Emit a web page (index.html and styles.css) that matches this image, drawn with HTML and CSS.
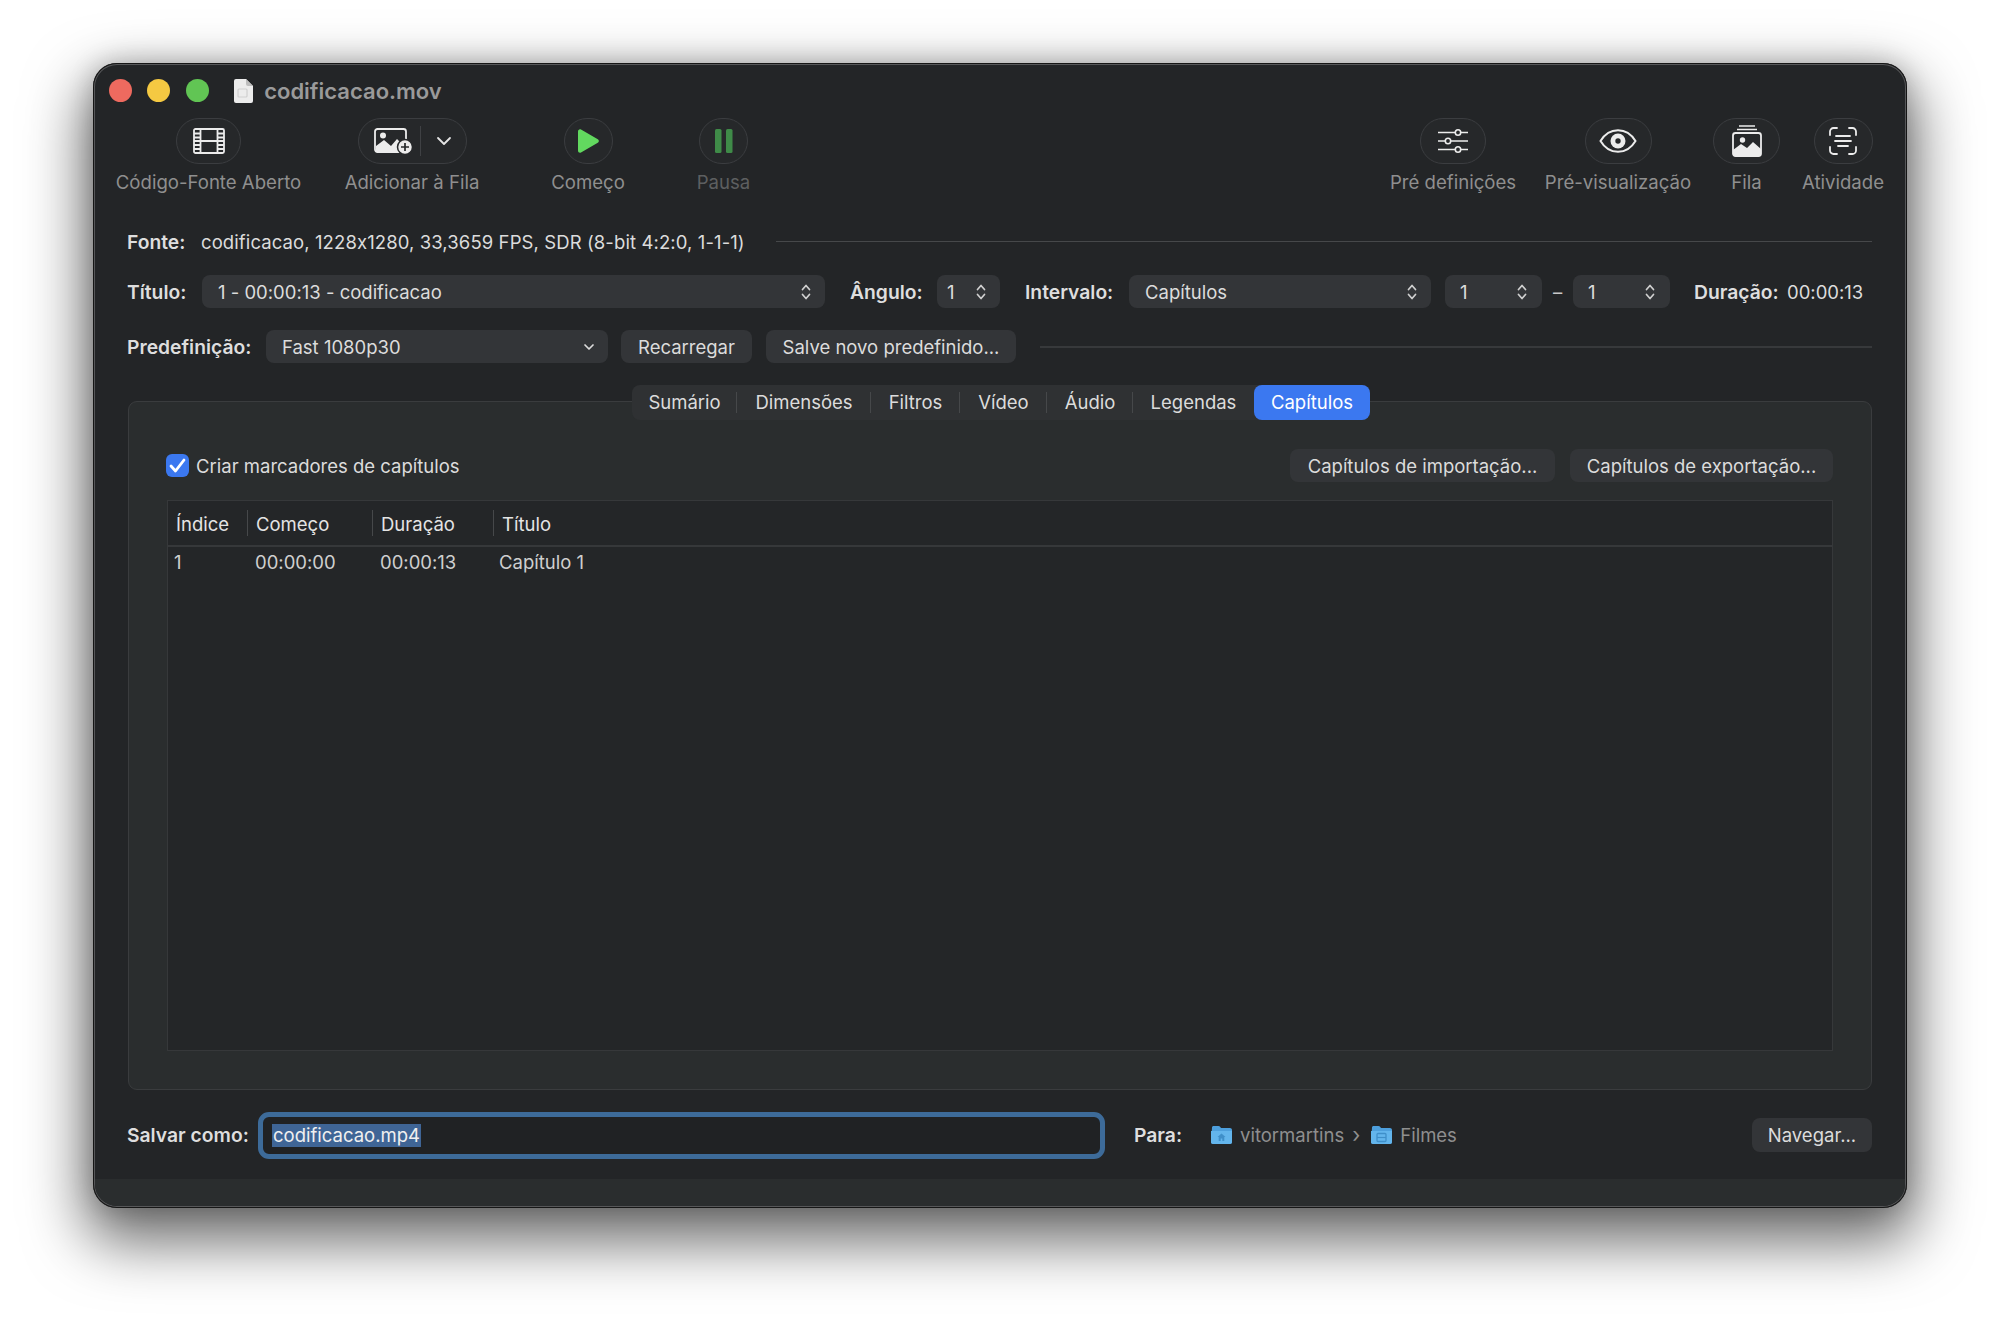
FILE: index.html
```html
<!DOCTYPE html>
<html lang="pt">
<head>
<meta charset="utf-8">
<title>codificacao.mov</title>
<link rel="stylesheet" href="styles.css">
</head>
<body>
<svg class="defs" width="0" height="0" aria-hidden="true">
  <symbol id="updown" viewBox="0 0 10 18"><path d="M1.5 6.5 5 2.5l3.5 4M1.5 11.5 5 15.500l3.500-4" fill="none" stroke="currentColor" stroke-width="1.700" stroke-linecap="round" stroke-linejoin="round"/></symbol>
</svg>
<main class="window">
  <header class="titlebar">
    <span class="light red"></span><span class="light yellow"></span><span class="light green"></span>
    <svg class="doc-icon" width="19" height="24" viewBox="0 0 19 24"><path d="M2 0h10l7 7v15a2 2 0 0 1-2 2H2a2 2 0 0 1-2-2V2a2 2 0 0 1 2-2z" fill="#ececec"/><path d="M12 0l7 7h-5a2 2 0 0 1-2-2z" fill="#bdbdbd"/><rect x="4" y="10" width="9" height="8" rx="1" fill="none" stroke="#cfcfcf" stroke-width="1.200"/></svg>
    <h1 class="doc-title">codificacao.mov</h1>
  </header>

  <nav class="toolbar">
    <div class="tool tool-source">
      <span class="tool-btn btn-source">
        <svg width="32" height="26" viewBox="0 0 32 26" fill="none" stroke="#ececec" stroke-width="1.800"><rect x="1" y="1" width="30" height="24" rx="1.500"/><path d="M7.500 1v24M24.500 1v24M7.500 13h17M1 5.500h6.500M1 9.500h6.500M1 13h6.500M1 17h6.500M1 21h6.500M24.500 5.500H31M24.500 9.500H31M24.500 13H31M24.500 17H31M24.500 21H31"/></svg>
      </span>
      <span class="tool-label">Código-Fonte Aberto</span>
    </div>
    <div class="tool tool-add">
      <span class="tool-btn btn-add">
        <svg class="add-photo" width="40" height="27" viewBox="0 0 40 27"><rect x="1" y="1" width="31" height="23" rx="2.500" fill="none" stroke="#ececec" stroke-width="1.800"/><path d="M2 23v-5l8-6 7 6 6-7 9 9v3z" fill="#ececec"/><circle cx="9" cy="7.500" r="3" fill="#ececec"/><circle cx="31" cy="19" r="7.500" fill="#ececec" stroke="#26282a" stroke-width="1.500"/><path d="M31 15v8M27 19h8" stroke="#26282a" stroke-width="1.700"/></svg>
        <span class="add-split"></span>
        <svg width="16" height="10" viewBox="0 0 16 10"><path d="M2 2l6 6 6-6" fill="none" stroke="#e4e4e4" stroke-width="1.800" stroke-linecap="round" stroke-linejoin="round"/></svg>
      </span>
      <span class="tool-label">Adicionar à Fila</span>
    </div>
    <div class="tool tool-start">
      <span class="tool-btn btn-round">
        <svg width="21" height="24" viewBox="0 0 21 24"><path d="M0 2.500C0 .7 1.600-.3 3 .5l16.800 9.800c1.400.8 1.400 2.700 0 3.500L3 23.500c-1.400.8-3 -.2-3-2z" fill="#62d95f"/></svg>
      </span>
      <span class="tool-label">Começo</span>
    </div>
    <div class="tool tool-pause">
      <span class="tool-btn btn-round">
        <svg width="18" height="24" viewBox="0 0 18 24" fill="#3f8b48"><rect x="0" width="6.500" height="24" rx="1.500"/><rect x="11" width="6.500" height="24" rx="1.500"/></svg>
      </span>
      <span class="tool-label tool-label-dim">Pausa</span>
    </div>
    <div class="tool tool-presets">
      <span class="tool-btn btn-presets">
        <svg width="30" height="24" viewBox="0 0 30 24" fill="#26282a" stroke="#ececec" stroke-width="1.600"><path d="M0 3.500h30M0 12h30M0 20.500h30"/><circle cx="20" cy="3.500" r="2.700"/><circle cx="10" cy="12" r="2.700"/><circle cx="20" cy="20.500" r="2.700"/></svg>
      </span>
      <span class="tool-label">Pré definições</span>
    </div>
    <div class="tool tool-preview">
      <span class="tool-btn btn-preview">
        <svg width="38" height="24" viewBox="0 0 38 24"><path d="M1.500 12C6 4.500 12 1.200 19 1.200S32 4.500 36.500 12C32 19.500 26 22.800 19 22.800S6 19.500 1.500 12z" fill="none" stroke="#ececec" stroke-width="2"/><circle cx="19" cy="12" r="7.500" fill="#ececec"/><circle cx="19" cy="12" r="2.700" fill="#26282a"/></svg>
      </span>
      <span class="tool-label">Pré-visualização</span>
    </div>
    <div class="tool tool-queue">
      <span class="tool-btn btn-queue">
        <svg width="30" height="32" viewBox="0 0 30 32"><path d="M7 1h16M5 4.500h20" stroke="#ececec" stroke-width="1.500" fill="none"/><rect x="1" y="8" width="28" height="23" rx="2.500" fill="none" stroke="#ececec" stroke-width="1.800"/><path d="M1 31v-6l8-6 6 4 6-6 8 7v7z" fill="#ececec"/><circle cx="10.500" cy="15" r="2.700" fill="#ececec"/></svg>
      </span>
      <span class="tool-label">Fila</span>
    </div>
    <div class="tool tool-activity">
      <span class="tool-btn btn-activity">
        <svg width="28" height="28" viewBox="0 0 28 28" fill="none" stroke="#ececec" stroke-width="1.800" stroke-linecap="round"><path d="M1 8V4.500A3.500 3.500 0 0 1 4.500 1H8M20 1h3.500A3.500 3.500 0 0 1 27 4.500V8M27 20v3.500a3.500 3.500 0 0 1-3.500 3.500H20M8 27H4.500A3.500 3.500 0 0 1 1 23.500V20M7 9h14M6 14h16M9 19h10"/></svg>
      </span>
      <span class="tool-label">Atividade</span>
    </div>
  </nav>

  <section class="form">
    <div class="row row-source">
      <b class="lbl lbl-source">Fonte:</b>
      <span class="source-text">codificacao, 1228x1280, 33,3659 FPS, SDR (8-bit 4:2:0, 1-1-1)</span>
      <span class="rule"></span>
    </div>
    <div class="row row-title">
      <b class="lbl lbl-title">Título:</b>
      <span class="select sel-title">1 - 00:00:13 - codificacao<svg class="updown" width="10" height="18"><use href="#updown"/></svg></span>
      <b class="lbl lbl-angle">Ângulo:</b>
      <span class="select sel-angle">1<svg class="updown" width="10" height="18"><use href="#updown"/></svg></span>
      <b class="lbl lbl-range">Intervalo:</b>
      <span class="select sel-range">Capítulos<svg class="updown" width="10" height="18"><use href="#updown"/></svg></span>
      <span class="select sel-num">1<svg class="updown" width="10" height="18"><use href="#updown"/></svg></span>
      <span class="dash">–</span>
      <span class="select sel-num">1<svg class="updown" width="10" height="18"><use href="#updown"/></svg></span>
      <b class="lbl lbl-dur">Duração:</b>
      <span class="dur">00:00:13</span>
    </div>
    <div class="row row-preset">
      <b class="lbl lbl-preset">Predefinição:</b>
      <span class="select sel-preset">Fast 1080p30<svg width="12" height="8" viewBox="0 0 12 8"><path d="M2 2l4 4 4-4" fill="none" stroke="currentColor" stroke-width="1.700" stroke-linecap="round" stroke-linejoin="round"/></svg></span>
      <span class="btn btn-reload">Recarregar</span>
      <span class="btn btn-save">Salve novo predefinido...</span>
      <span class="rule rule-thick"></span>
    </div>

    <div class="tabs">
      <span class="tab">Sumário</span>
      <span class="tab">Dimensões</span>
      <span class="tab">Filtros</span>
      <span class="tab">Vídeo</span>
      <span class="tab">Áudio</span>
      <span class="tab tab-last">Legendas</span>
      <span class="tab tab-active">Capítulos</span>
    </div>

    <div class="panel">
      <div class="panel-head">
        <label class="check">
          <span class="checkbox"><svg width="17" height="15" viewBox="0 0 17 15"><path d="M2 8l4.500 5L15 2" fill="none" stroke="#fff" stroke-width="2.800" stroke-linecap="round" stroke-linejoin="round"/></svg></span>
          Criar marcadores de capítulos
        </label>
        <span class="btn btn-import">Capítulos de importação...</span>
        <span class="btn btn-export">Capítulos de exportação...</span>
      </div>
      <div class="table">
        <div class="thead">
          <span class="th th-index">Índice</span>
          <span class="th th-start">Começo</span>
          <span class="th th-dur">Duração</span>
          <span class="th th-name">Título</span>
        </div>
        <div class="trow">
          <span class="td-index">1</span>
          <span>00:00:00</span>
          <span>00:00:13</span>
          <span>Capítulo 1</span>
        </div>
      </div>
    </div>

    <div class="row row-save">
      <b class="lbl lbl-save">Salvar como:</b>
      <div class="save-field"><span class="selected">codificacao.mp4</span></div>
      <b class="lbl lbl-to">Para:</b>
      <svg class="folder" width="21" height="18" viewBox="0 0 21 18"><path d="M1 1.500C1 .7 1.700 0 2.500 0h5c.6 0 1 .2 1.400.600L10 2h9c1 0 2 .8 2 2v12c0 1.100-.9 2-2 2H2c-1.100 0-2-.9-2-2z" fill="#4d9fdc"/><path d="M0 5h21v11c0 1.100-.9 2-2 2H2c-1.100 0-2-.9-2-2z" fill="#63b5ec"/><path d="M10.500 7.500l-4 3.500h1.200v4h2v-2.500h1.600V15h2v-4h1.200z" fill="#3f8fc9"/></svg>
      <span class="path path-user">vitormartins</span>
      <span class="crumb">›</span>
      <svg class="folder" width="21" height="18" viewBox="0 0 21 18"><path d="M1 1.500C1 .7 1.700 0 2.500 0h5c.6 0 1 .2 1.400.600L10 2h9c1 0 2 .8 2 2v12c0 1.100-.9 2-2 2H2c-1.100 0-2-.9-2-2z" fill="#4d9fdc"/><path d="M0 5h21v11c0 1.100-.9 2-2 2H2c-1.100 0-2-.9-2-2z" fill="#63b5ec"/><rect x="6" y="7.500" width="9" height="8" rx="1" fill="none" stroke="#3f8fc9" stroke-width="1.300"/><path d="M6 11.500h9" stroke="#3f8fc9" stroke-width="1.200"/></svg>
      <span class="path path-movies">Filmes</span>
      <span class="btn btn-browse">Navegar...</span>
    </div>
  </section>
  <div class="status-strip"></div>
</main>
</body>
</html>
```
FILE: styles.css
```css
* { box-sizing: border-box; }
html, body { margin: 0; padding: 0; background: #fff; }
body {
  width: 2000px;
  height: 1332px;
  overflow: hidden;
  padding: 63px 93px 0;
  font-family: Inter, Roboto, "Liberation Sans", sans-serif;
  font-feature-settings: "calt" 0;
  font-size: 18.500px;
  color: #dcdcdc;
}
.defs { display: block; height: 0; }
.window {
  width: 1814px;
  height: 1145px;
  display: flex;
  flex-direction: column;
  background: #232527;
  border-radius: 24px;
  box-shadow: inset 0 0 0 1px #161616, inset 0 0 0 2px #565759, 0 26px 60px 8px rgba(0,0,0,.58), 0 0 26px rgba(0,0,0,.2);
}

.titlebar { height: 55px; flex: none; display: flex; align-items: center; padding-left: 16px; padding-top: 0; }
.light { width: 23px; height: 23px; border-radius: 50%; margin-right: 15.400px; }
.red { background: #ee6a5f; }
.yellow { background: #f5c942; }
.green { background: #61c554; }
.doc-icon { margin-left: 10px; flex: none; }
.doc-title { margin: 0 0 0 11px; font-size: 22px; font-weight: 600; color: #9a9a9a; }

.toolbar { height: 75px; flex: none; display: flex; padding-left: 23px; }
.tool { display: flex; flex-direction: column; align-items: center; flex: none; }
.tool-btn { height: 46px; flex: none; display: flex; align-items: center; justify-content: center; border: 1px solid #3b3d40; border-radius: 23px; background: #26282a; }
.tool-label { margin-top: 6px; line-height: 24px; font-size: 18.600px; color: #8f8f8f; white-space: nowrap; }
.tool-label-dim { color: #5d5f60; }
.tool-source { width: 185px; }
.tool-add { width: 132px; margin-left: 45px; }
.tool-start { width: 72px; margin-left: 74px; }
.tool-pause { width: 51px; margin-left: 74px; }
.tool-presets { width: 124px; margin-left: 642px; }
.tool-preview { width: 144px; margin-left: 31px; }
.tool-queue { width: 67px; margin-left: 23px; }
.tool-activity { width: 80px; margin-left: 23px; }
.btn-source { width: 65px; }
.btn-add { width: 109px; justify-content: flex-start; padding-left: 15px; }
.add-photo { flex: none; }
.add-split { width: 1px; height: 30px; margin: 0 15px 0 6px; background: #3f4144; }
.btn-round { width: 49px; }
.btn-presets { width: 66px; }
.btn-preview { width: 67px; }
.btn-queue { width: 67px; }
.btn-activity { width: 59px; }

.form { flex: 1; display: flex; flex-direction: column; padding: 32px 35px 0 34px; min-height: 0; }
.row { display: flex; align-items: center; height: 33px; flex: none; white-space: nowrap; }
.row-title { margin-top: 17px; }
.row-preset { margin-top: 22px; }
.lbl { font-weight: 600; font-size: 19.300px; color: #dedede; flex: none; }
.rule { flex: 1; height: 1px; background: #46484a; }
.row-source .lbl-source { width: 74px; }
.source-text { width: 548px; margin-right: 27px; flex: none; letter-spacing: .1px; }
.select { height: 33px; flex: none; display: flex; align-items: center; justify-content: space-between; border-radius: 8px; background: #333538; padding: 0 14px 0 16px; color: #dcdcdc; }
.updown { color: #d0d0d0; flex: none; }
.lbl-title { width: 75px; }
.sel-title { width: 623px; }
.lbl-angle { margin-left: 25px; width: 87px; }
.sel-angle { width: 63px; padding-left: 10px; }
.lbl-range { margin-left: 25px; width: 104px; }
.sel-range { width: 302px; }
.sel-num { width: 97px; padding-left: 15px; padding-right: 15px; }
.sel-range + .sel-num { margin-left: 14px; }
.dash { width: 31px; text-align: center; flex: none; color: #c8c8c8; }
.lbl-dur { margin-left: 24px; width: 93px; }
.dur { flex: none; }
.lbl-preset { width: 139px; }
.sel-preset { width: 342px; padding-right: 13px; }
.btn { height: 33px; flex: none; display: flex; align-items: center; justify-content: center; border-radius: 8px; background: #333538; color: #dcdcdc; }
.btn-reload { width: 131px; margin-left: 13px; }
.btn-save { width: 250px; margin-left: 14px; }
.rule-thick { margin-left: 24px; height: 2px; background: #37393b; }

.tabs { position: relative; z-index: 1; height: 35px; flex: none; margin: 22px 0 0 505px; display: grid; grid-template-columns: 105px 134px 89px 87px 86px 121px 116px; width: 738px; border-radius: 8px; background: #2f3133; }
.tab { display: flex; align-items: center; justify-content: center; padding-bottom: 1px; color: #dcdcdc; background: linear-gradient(#46484a, #46484a) right center / 1px 21px no-repeat; }
.tab-last { background: none; }
.tab-active { background: #3b78f0; color: #fff; border-radius: 8px; }

.panel { margin-top: -19px; height: 689px; flex: none; margin-left: 1px; display: flex; flex-direction: column; padding: 47px 38px 38px 38px; background: #2a2d2e; border: 1px solid #3a3c3e; border-radius: 9px; }
.panel-head { height: 33px; flex: none; display: flex; align-items: center; margin-bottom: 18px; }
.check { display: flex; align-items: center; flex: none; color: #dcdcdc; margin-right: auto; margin-left: -1px; }
.checkbox { width: 23px; height: 23px; margin-right: 7px; display: flex; align-items: center; justify-content: center; border-radius: 6px; background: #3b78f0; }
.btn-import { width: 265px; }
.btn-export { width: 263px; margin-left: 15px; }
.table { flex: 1; min-height: 0; background: #242628; border: 1px solid #36383a; }
.thead { height: 46px; display: grid; grid-template-columns: 80px 125px 121px 1fr; align-items: center; border-bottom: 2px solid #36383a; }
.th { height: 100%; display: flex; align-items: center; padding: 1px 0 0 8px; color: #e4e4e4; background: linear-gradient(#46484a, #46484a) right center / 1px 26px no-repeat; }
.th-name { background: none; }
.trow { height: 30px; display: grid; grid-template-columns: 80px 125px 121px 1fr; align-items: center; color: #cfcfcf; }
.trow span { padding-left: 7px; }
.trow .td-index { padding-left: 6px; }
.trow span:nth-child(4) { padding-left: 5px; }

.row-save { margin-top: 22px; height: 47px; }
.row-save .lbl, .row-save .folder, .row-save .path, .row-save .crumb { margin-bottom: 2px; }
.lbl-save { width: 131px; }
.save-field { width: 847px; height: 47px; flex: none; display: flex; align-items: center; padding-left: 9px; background: #202224; border: 5px solid #3d6b99; border-radius: 11px; }
.selected { padding: 0 1px; line-height: 23px; background: #3f6596; color: #f0f0f0; }
.lbl-to { margin-left: 29px; width: 77px; }
.folder { flex: none; }
.path { margin-left: 8px; color: #8f8f8f; }
.crumb { margin: 0 11px 2px 8px; font-size: 21px; color: #8f8f8f; }
.row-save .btn-browse { width: 120px; height: 34px; margin: 0 0 2px auto; }

.status-strip { height: 27px; flex: none; margin: 22px 2px 2px; background: #2a2d2e; border-radius: 0 0 22px 22px; }
```
